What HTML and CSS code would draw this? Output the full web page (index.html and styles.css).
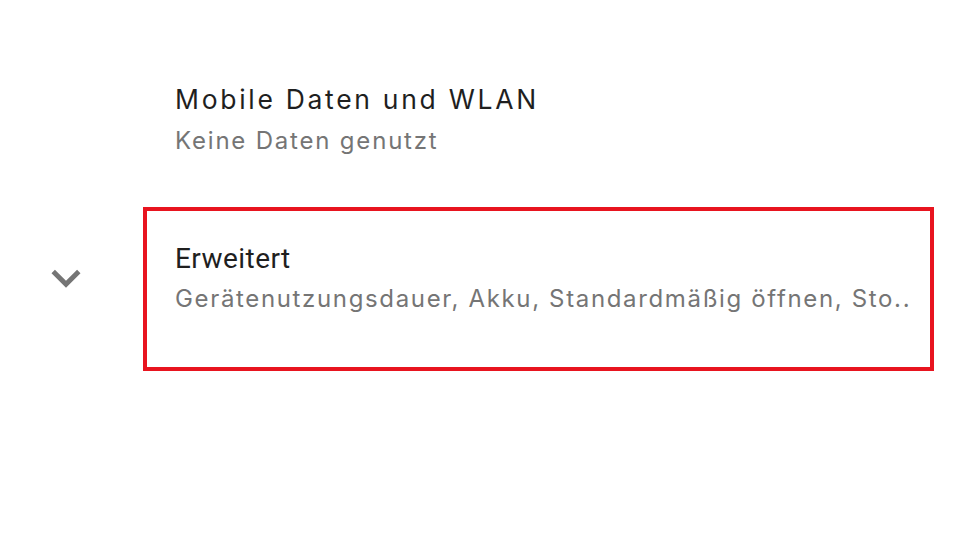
FILE: index.html
```html
<!DOCTYPE html>
<html lang="de">
<head>
<meta charset="utf-8">
<link rel="stylesheet" href="styles.css">
</head>
<body>
<div class="list">
  <div class="row row-first">
    <div class="icon-col"></div>
    <div class="text">
      <div class="title title-wide">Mobile Daten und WLAN</div>
      <div class="summary">Keine Daten genutzt</div>
    </div>
  </div>
  <div class="row row-adv">
    <div class="icon-col">
      <svg class="chevron" width="58" height="58" viewBox="0 0 24 24"><path d="M16.59 8.59L12 13.17 7.41 8.59 6 10l6 6 6-6z" fill="#757575"/></svg>
    </div>
    <div class="text highlight">
      <div class="title">Erweitert</div>
      <div class="summary">Gerätenutzungsdauer, Akku, Standardmäßig öffnen, Sto..</div>
    </div>
  </div>
</div>
</body>
</html>
```
FILE: styles.css
```css
html, body {
  margin: 0;
  padding: 0;
  background: #ffffff;
  width: 960px;
  height: 540px;
  overflow: hidden;
  font-family: Roboto, "Noto Sans", sans-serif;
}
.list {
  display: flex;
  flex-direction: column;
  padding-top: 81px;
}
.row {
  display: flex;
  align-items: flex-start;
}
.icon-col {
  width: 143px;
  flex: none;
}
.text {
  display: flex;
  flex-direction: column;
  padding-left: 32px;
  white-space: nowrap;
}
.row-adv {
  margin-top: 48px;
}
.chevron {
  display: block;
  margin-left: 37px;
  margin-top: 42px;
}
.highlight {
  width: 791px;
  height: 164px;
  box-sizing: border-box;
  border: 4px solid #e8141f;
  padding-left: 28px;
  padding-top: 30px;
}
.title {
  font-family: Roboto, "Noto Sans", sans-serif;
  font-size: 28px;
  line-height: 36px;
  letter-spacing: 0.45px;
  color: #1f1f1f;
}
.title-wide {
  font-family: Inter, Roboto, sans-serif;
  font-size: 26.5px;
  letter-spacing: 2.7px;
}
.summary {
  font-family: Inter, Roboto, sans-serif;
  font-size: 24px;
  line-height: 36px;
  letter-spacing: 1.8px;
  margin-top: 6px;
  color: #757575;
}
.highlight .summary {
  margin-top: 4px;
  letter-spacing: 1.65px;
}
```
